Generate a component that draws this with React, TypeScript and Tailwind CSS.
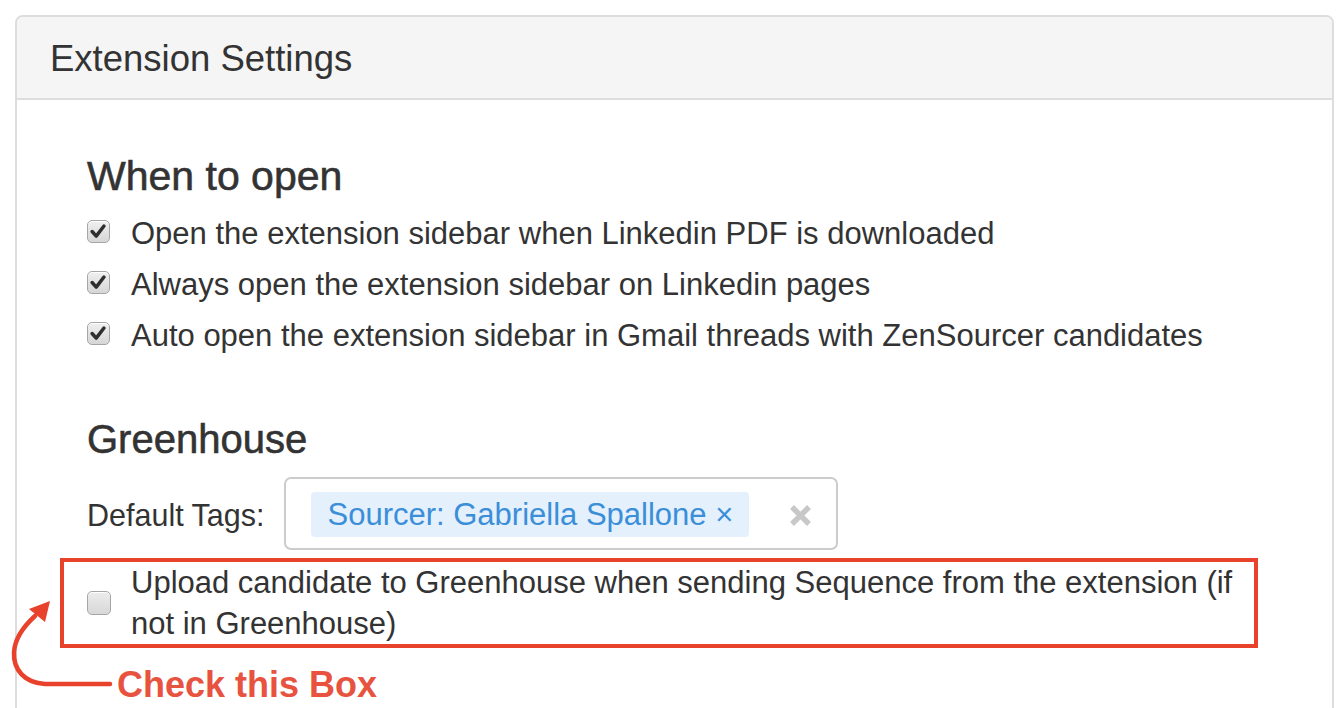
import React from "react";

const font = { fontFamily: '"Liberation Sans", Arial, Helvetica, sans-serif' };

function CheckedBox() {
  return (
    <span className="mt-[7px] flex h-[23px] w-[23px] shrink-0 items-center justify-center rounded-[5px] border border-[#a6a6a6] bg-linear-to-b from-[#f0f0f0] to-[#d6d6d6] shadow-[inset_0_1px_0_#ffffff]">
      <svg width="23" height="23" viewBox="0 0 23 23">
        <polyline
          points="4.5,11.5 9,16.5 17.5,5.5"
          fill="none"
          stroke="#2e2e2e"
          strokeWidth="3.8"
          strokeLinecap="round"
          strokeLinejoin="round"
        />
      </svg>
    </span>
  );
}

function EmptyBox() {
  return (
    <span className="h-[24px] w-[24px] shrink-0 rounded-[5px] border border-[#a6a6a6] bg-linear-to-b from-[#ececec] to-[#d8d8d8] shadow-[inset_0_1px_0_#ffffff]" />
  );
}

function Row({ children }: { children: React.ReactNode }) {
  return (
    <div className="flex items-start gap-[21px] text-[31px] leading-[42px] text-[#333]">
      <CheckedBox />
      <span>{children}</span>
    </div>
  );
}

export default function App() {
  return (
    <div
      className="relative h-[708px] w-[1344px] overflow-hidden bg-white pl-[15px] pr-[10px] pt-[15px]"
      style={font}
    >
      <div className="h-[760px] rounded-t-[8px] border-2 border-[#dddddd]">
        <div className="rounded-t-[6px] border-b-2 border-[#dddddd] bg-[#f5f5f5] pb-[19px] pl-[33px] pt-[22px]">
          <div className="text-[36.5px] leading-[40px] text-[#333]">Extension Settings</div>
        </div>
        <div className="pl-[70px] pt-[54px]">
          <div className="text-[41px] leading-[44px] text-[#333] [-webkit-text-stroke:0.6px_#333]">
            When to open
          </div>
          <div className="mt-[15px] flex flex-col gap-[9px]">
            <Row>Open the extension sidebar when Linkedin PDF is downloaded</Row>
            <Row>Always open the extension sidebar on Linkedin pages</Row>
            <Row>Auto open the extension sidebar in Gmail threads with ZenSourcer candidates</Row>
          </div>

          <div className="mt-[60px] text-[40px] leading-[44px] text-[#333] [-webkit-text-stroke:0.6px_#333]">
            Greenhouse
          </div>

          <div className="mt-[16px] flex items-center gap-[20px]">
            <span className="pt-[3px] text-[30.5px] leading-[42px] text-[#333]">Default Tags:</span>
            <div className="flex h-[73px] w-[554px] items-start rounded-[7px] border-2 border-[#cccccc] bg-white pl-[25px] pt-[13px]">
              <span className="flex h-[45px] items-center rounded-[4px] bg-[#e4f0fc] px-[16px] text-[31px] leading-[42px] text-[#3b8ed8]">
                Sourcer: Gabriella Spallone ×
              </span>
              <svg className="ml-[40px] mt-[12px]" width="23" height="23" viewBox="0 0 23 23">
                <path d="M3 3 L20 20 M20 3 L3 20" stroke="#c8c8c8" strokeWidth="5.5" strokeLinecap="butt" />
              </svg>
            </div>
          </div>

          <div className="ml-[-27px] mt-[8px] flex w-[1198px] items-center gap-[20px] border-4 border-[#e8412c] pl-[23px] text-[31px] leading-[41px] text-[#333]">
            <EmptyBox />
            <span>
              Upload candidate to Greenhouse when sending Sequence from the extension (if
              <br />
              not in Greenhouse)
            </span>
          </div>

          <div className="ml-[30px] mt-[17px] text-[36px] font-bold leading-[40px] text-[#e8533f]">
            Check this Box
          </div>
        </div>
      </div>

      <svg
        className="pointer-events-none absolute left-0 top-0"
        width="1344"
        height="708"
        viewBox="0 0 1344 708"
      >
        <path
          d="M110 684 L45 684 C25 683 13 670 14 652 C15 638 24 626 35 616"
          fill="none"
          stroke="#e8412c"
          strokeWidth="4.5"
          strokeLinecap="round"
        />
        <polygon points="50,601 29,609 45,622" fill="#e8412c" />
      </svg>
    </div>
  );
}
